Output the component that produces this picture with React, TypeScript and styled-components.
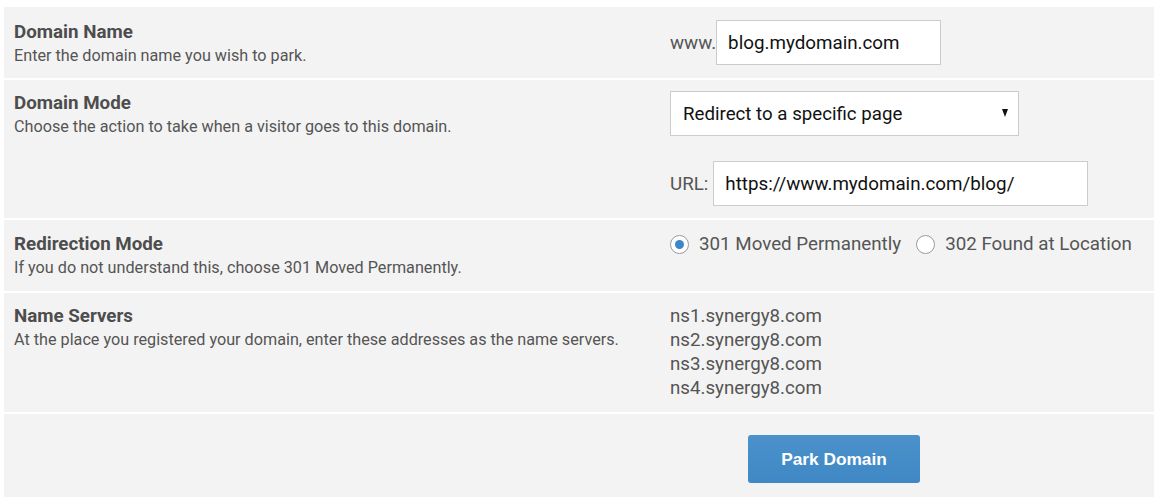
import React from 'react';
import styled, { createGlobalStyle } from 'styled-components';

const GlobalStyle = createGlobalStyle`
    body {
        margin: 0;
        padding: 7px 0 0 4px;
        background: #ffffff;
        font-family: Roboto, 'Liberation Sans', sans-serif;
    }
`;

const Form = styled.div`
    display: flex;
    flex-direction: column;
    gap: 2px;
`;

const Row = styled.div<{ $pad?: string }>`
    display: grid;
    grid-template-columns: 656px 1fr;
    align-items: start;
    padding: ${({ $pad }) => $pad || '13px 0 12px 10px'};
    background: #f3f3f3;
`;

const Label = styled.div`
    display: flex;
    flex-direction: column;
`;

const Title = styled.div`
    font-size: 18.75px;
    font-weight: 700;
    line-height: 24px;
    color: #4d4d4d;
`;

const Hint = styled.div`
    margin-top: 1px;
    font-size: 16.2px;
    line-height: 21px;
    color: #555;
`;

const Field = styled.div`
    display: flex;
    flex-direction: column;
    align-items: flex-start;
`;

const Inline = styled.div<{ $gap?: number }>`
    display: flex;
    align-items: center;
    gap: ${({ $gap }) => $gap ?? 0}px;
    font-size: 18.75px;
    color: #555;
`;

const TextBox = styled.input<{ $w: number }>`
    box-sizing: border-box;
    width: ${({ $w }) => $w}px;
    height: 45px;
    padding: 0 11px;
    border: 1px solid #ccc;
    background: #fff;
    font-family: Roboto, sans-serif;
    font-size: 18.8px;
    color: #111;
    outline: none;
`;

const SelectWrap = styled.div`
    position: relative;
    margin-bottom: 25px;
`;

const Select = styled.select`
    appearance: none;
    box-sizing: border-box;
    width: 349px;
    height: 45px;
    padding: 0 12px;
    border: 1px solid #ccc;
    border-radius: 0;
    background: #fff;
    font-family: Roboto, sans-serif;
    font-size: 18.7px;
    color: #111;
    outline: none;
`;

const Caret = styled.span`
    position: absolute;
    right: 11px;
    top: 18px;
    width: 0;
    height: 0;
    border-left: 3.5px solid transparent;
    border-right: 3.5px solid transparent;
    border-top: 8px solid #111;
    pointer-events: none;
`;

const RadioLabel = styled.label`
    display: flex;
    align-items: center;
    gap: 10px;
    line-height: 24px;
`;

const Radio = styled.input`
    appearance: none;
    box-sizing: border-box;
    margin: 0;
    width: 19px;
    height: 19px;
    border: 1px solid #9a9a9a;
    border-radius: 50%;
    background: #fff;
    display: grid;
    place-items: center;

    &:checked::after {
        content: '';
        width: 9px;
        height: 9px;
        border-radius: 50%;
        background: #3d87c8;
    }
`;

const ServerList = styled.div`
    font-size: 18.7px;
    line-height: 24px;
    color: #555;
`;

const Button = styled.button`
    margin-left: 78px;
    width: 172px;
    height: 48px;
    border: none;
    border-radius: 3px;
    background: linear-gradient(#4b92cb, #3f88c5);
    color: #fff;
    font-family: 'Liberation Sans', Arial, sans-serif;
    font-size: 17.3px;
    font-weight: 700;
    cursor: pointer;
`;

export default function App() {
    return (
        <>
            <GlobalStyle />
            <Form>
                <Row>
                    <Label>
                        <Title>Domain Name</Title>
                        <Hint>Enter the domain name you wish to park.</Hint>
                    </Label>
                    <Inline>
                        www.
                        <TextBox $w={225} defaultValue="blog.mydomain.com" />
                    </Inline>
                </Row>
                <Row $pad="11px 0 12px 10px">
                    <Label>
                        <Title>Domain Mode</Title>
                        <Hint>Choose the action to take when a visitor goes to this domain.</Hint>
                    </Label>
                    <Field>
                        <SelectWrap>
                            <Select defaultValue="page">
                                <option value="page">Redirect to a specific page</option>
                                <option value="site">Park on the main site</option>
                            </Select>
                            <Caret />
                        </SelectWrap>
                        <Inline $gap={5}>
                            URL:
                            <TextBox $w={375} defaultValue="https://www.mydomain.com/blog/" />
                        </Inline>
                    </Field>
                </Row>
                <Row $pad="12px 0 13px 10px">
                    <Label>
                        <Title>Redirection Mode</Title>
                        <Hint>If you do not understand this, choose 301 Moved Permanently.</Hint>
                    </Label>
                    <Inline $gap={15}>
                        <RadioLabel>
                            <Radio type="radio" name="mode" defaultChecked />
                            301 Moved Permanently
                        </RadioLabel>
                        <RadioLabel>
                            <Radio type="radio" name="mode" />
                            302 Found at Location
                        </RadioLabel>
                    </Inline>
                </Row>
                <Row $pad="11px 0 12px 10px">
                    <Label>
                        <Title>Name Servers</Title>
                        <Hint>At the place you registered your domain, enter these addresses as the name servers.</Hint>
                    </Label>
                    <ServerList>
                        <div>ns1.synergy8.com</div>
                        <div>ns2.synergy8.com</div>
                        <div>ns3.synergy8.com</div>
                        <div>ns4.synergy8.com</div>
                    </ServerList>
                </Row>
                <Row $pad="21px 0 14px 10px">
                    <div />
                    <div>
                        <Button>Park Domain</Button>
                    </div>
                </Row>
            </Form>
        </>
    );
}
